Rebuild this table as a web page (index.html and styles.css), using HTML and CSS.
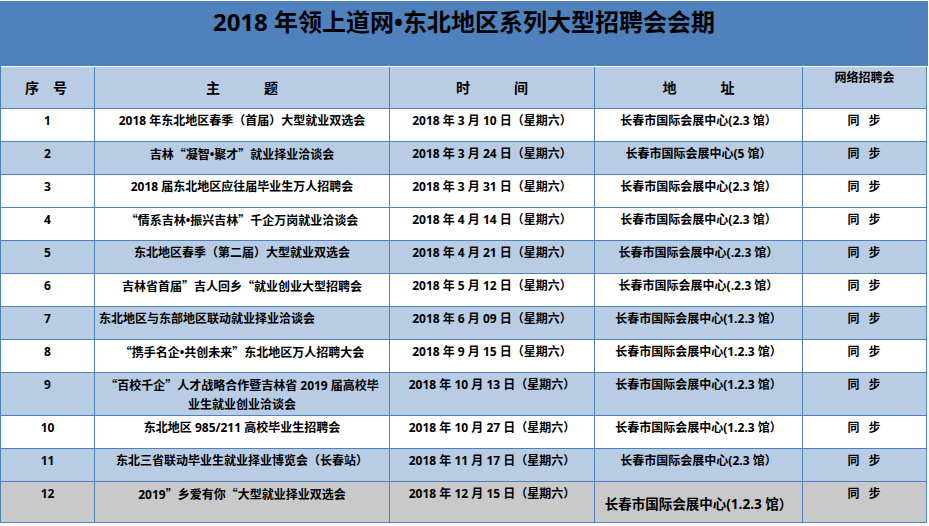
FILE: index.html
```html
<!DOCTYPE html>
<html lang="zh-CN">
<head>
<meta charset="utf-8">
<title>2018 年领上道网•东北地区系列大型招聘会会期</title>
<link rel="stylesheet" href="styles.css">
</head>
<body>
<div class="page">
  <div class="title">2018 年领上道网•东北地区系列大型招聘会会期</div>
  <div class="table">
    <div class="row head">
      <div class="c h narrow"><span>序</span><span>号</span></div>
      <div class="c h wide"><span>主</span><span>题</span></div>
      <div class="c h wide"><span>时</span><span>间</span></div>
      <div class="c h wide"><span>地</span><span>址</span></div>
      <div class="c hs">网络招聘会</div>
    </div>

    <div class="row white">
      <div class="c">1</div>
      <div class="c">2018 年东北地区春季（首届）大型就业双选会</div>
      <div class="c">2018 年 3 月 10 日（星期六）</div>
      <div class="c">长春市国际会展中心(2.3 馆）</div>
      <div class="c sync"><span>同</span><span>步</span></div>
    </div>

    <div class="row blue">
      <div class="c">2</div>
      <div class="c">吉林<span class="q">“</span>凝智•聚才<span class="q">”</span>就业择业洽谈会</div>
      <div class="c">2018 年 3 月 24 日（星期六）</div>
      <div class="c">长春市国际会展中心(5 馆）</div>
      <div class="c sync"><span>同</span><span>步</span></div>
    </div>

    <div class="row white">
      <div class="c">3</div>
      <div class="c">2018 届东北地区应往届毕业生万人招聘会</div>
      <div class="c">2018 年 3 月 31 日（星期六）</div>
      <div class="c">长春市国际会展中心(2.3 馆）</div>
      <div class="c sync"><span>同</span><span>步</span></div>
    </div>

    <div class="row white">
      <div class="c">4</div>
      <div class="c"><span class="q">“</span>情系吉林•振兴吉林<span class="q">”</span>千企万岗就业洽谈会</div>
      <div class="c">2018 年 4 月 14 日（星期六）</div>
      <div class="c">长春市国际会展中心(2.3 馆）</div>
      <div class="c sync"><span>同</span><span>步</span></div>
    </div>

    <div class="row blue">
      <div class="c">5</div>
      <div class="c">东北地区春季（第二届）大型就业双选会</div>
      <div class="c">2018 年 4 月 21 日（星期六）</div>
      <div class="c">长春市国际会展中心(.2.3 馆）</div>
      <div class="c sync"><span>同</span><span>步</span></div>
    </div>

    <div class="row white">
      <div class="c">6</div>
      <div class="c">吉林省首届<span class="q">”</span>吉人回乡<span class="q">“</span>就业创业大型招聘会</div>
      <div class="c">2018 年 5 月 12 日（星期六）</div>
      <div class="c">长春市国际会展中心(.2.3 馆）</div>
      <div class="c sync"><span>同</span><span>步</span></div>
    </div>

    <div class="row blue">
      <div class="c">7</div>
      <div class="c left">东北地区与东部地区联动就业择业洽谈会</div>
      <div class="c">2018 年 6 月 09 日（星期六）</div>
      <div class="c">长春市国际会展中心(1.2.3 馆）</div>
      <div class="c sync"><span>同</span><span>步</span></div>
    </div>

    <div class="row white">
      <div class="c">8</div>
      <div class="c"><span class="q">“</span>携手名企•共创未来<span class="q">”</span>东北地区万人招聘大会</div>
      <div class="c">2018 年 9 月 15 日（星期六）</div>
      <div class="c">长春市国际会展中心(1.2.3 馆）</div>
      <div class="c sync"><span>同</span><span>步</span></div>
    </div>

    <div class="row blue tall">
      <div class="c">9</div>
      <div class="c"><span class="q">“</span>百校千企<span class="q">”</span>人才战略合作暨吉林省 2019 届高校毕<br>业生就业创业洽谈会</div>
      <div class="c">2018 年 10 月 13 日（星期六）</div>
      <div class="c">长春市国际会展中心(1.2.3 馆）</div>
      <div class="c sync"><span>同</span><span>步</span></div>
    </div>

    <div class="row white">
      <div class="c">10</div>
      <div class="c">东北地区 985/211 高校毕业生招聘会</div>
      <div class="c">2018 年 10 月 27 日（星期六）</div>
      <div class="c">长春市国际会展中心(1.2.3 馆）</div>
      <div class="c sync"><span>同</span><span>步</span></div>
    </div>

    <div class="row blue">
      <div class="c">11</div>
      <div class="c">东北三省联动毕业生就业择业博览会（长春站）</div>
      <div class="c">2018 年 11 月 17 日（星期六）</div>
      <div class="c">长春市国际会展中心(2.3 馆）</div>
      <div class="c sync"><span>同</span><span>步</span></div>
    </div>

    <div class="row grey last">
      <div class="c">12</div>
      <div class="c">2019<span class="q">”</span>乡爱有你<span class="q">“</span>大型就业择业双选会</div>
      <div class="c">2018 年 12 月 15 日（星期六）</div>
      <div class="c big">长春市国际会展中心(1.2.3 馆）</div>
      <div class="c sync"><span>同</span><span>步</span></div>
    </div>
  </div>
</div>
</body>
</html>
```

FILE: styles.css
```css
html, body {
  margin: 0;
  padding: 0;
  background: #ffffff;
}

body {
  font-family: "Open Sans", "Noto Sans CJK SC", sans-serif;
  font-weight: 700;
  color: #000000;
}

.page {
  width: 928px;
  padding-top: 1px;
}

.title {
  height: 65px;
  box-sizing: border-box;
  padding-top: 5px;
  background: #4f81bd;
  text-align: center;
  font-size: 24px;
  line-height: 32px;
}

.table {
  width: 927px;
  border-left: 1px solid #4f81bd;
  box-sizing: border-box;
}

.row {
  display: grid;
  grid-template-columns: 94px 295px 205px 208px 124px;
  height: 33px;
  box-sizing: border-box;
  border-bottom: 1px solid #4f81bd;
}

.row.white { background: #ffffff; }
.row.blue { background: #b8cce4; }
.row.grey { background: #c9c9c9; }
.row.tall { height: 43px; }
.row.last { height: 41px; }

.row.head {
  height: 43px;
  border-top: 1px solid #ffffff;
  background: #b8cce4;
}

.c {
  border-right: 1px solid #4f81bd;
  box-sizing: border-box;
  padding: 2px 3px 0;
  text-align: center;
  font-size: 12px;
  line-height: 19px;
  white-space: nowrap;
}

.c.left {
  text-align: left;
  padding-left: 4px;
}

.q {
  font-family: "Noto Sans CJK SC", sans-serif;
}

.c.h {
  display: flex;
  justify-content: center;
  align-items: center;
  padding: 0;
  font-size: 14px;
}

.c.h.narrow { gap: 14px; padding-right: 3px; }
.c.h.wide { gap: 44px; }

.c.hs {
  padding-top: 1px;
  font-size: 12px;
}

.c.sync {
  display: flex;
  justify-content: center;
  align-items: flex-start;
  gap: 9px;
  padding-left: 2px;
}

.c.big {
  display: flex;
  justify-content: center;
  align-items: center;
  padding-top: 4px;
  font-size: 13.5px;
}
```
